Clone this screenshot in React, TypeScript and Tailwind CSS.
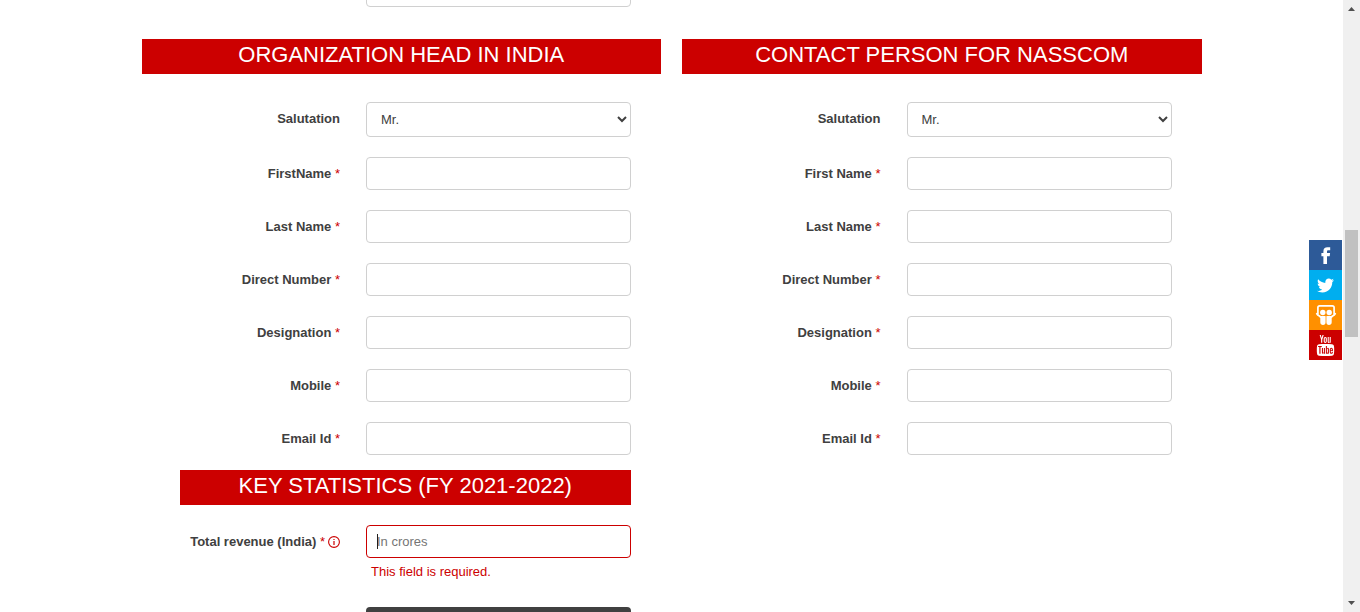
import { useId } from 'react';
import type { ReactNode } from 'react';
import { FaTwitter } from 'react-icons/fa';
import { TfiYoutube } from 'react-icons/tfi';

const fieldClass =
  'block w-full rounded border border-[#d0d0d0] bg-white px-[10px] text-[13px] text-[#404040] outline-none';

function Banner({ children }: { children: ReactNode }) {
  return (
    <h2 className="h-[35px] bg-[#cc0000] text-center font-['Liberation_Sans',Arial,sans-serif] text-[22px] leading-[31px] font-normal text-white uppercase">
      {children}
    </h2>
  );
}

type RowProps = {
  id: string;
  label: string;
  required?: boolean;
  extra?: ReactNode;
  children: ReactNode;
};

function Row({ id, label, required, extra, children }: RowProps) {
  return (
    <div className="flex items-start gap-[26px]">
      <div className="flex h-[33px] flex-1 items-center justify-end gap-[3px]">
        <label htmlFor={id} className="text-[13px] font-bold text-[#404040]">
          {label}
          {required && <span className="font-normal text-[#cc0000]"> *</span>}
        </label>
        {extra}
      </div>
      <div className="w-[265px] shrink-0">{children}</div>
    </div>
  );
}

function PersonForm({ title, fields }: { title: string; fields: string[] }) {
  const base = useId();
  return (
    <section>
      <Banner>{title}</Banner>
      <div className="mt-7 flex flex-col gap-5 pr-[30px]">
        <Row id={`${base}-salutation`} label="Salutation">
          <select id={`${base}-salutation`} className={`${fieldClass} h-[35px]`}>
            <option>Mr.</option>
            <option>Ms.</option>
            <option>Dr.</option>
          </select>
        </Row>
        {fields.map((field) => (
          <Row key={field} id={`${base}-${field}`} label={field} required>
            <input id={`${base}-${field}`} type="text" className={`${fieldClass} h-[33px]`} />
          </Row>
        ))}
      </div>
    </section>
  );
}

function InfoIcon() {
  return (
    <svg viewBox="0 0 12 12" className="size-3 text-[#cc0000]" aria-hidden="true">
      <circle cx="6" cy="6" r="5.4" fill="none" stroke="currentColor" strokeWidth="1.1" />
      <path d="M5.4 2.9h1.2v1.2H5.4zM5.4 5h1.2v4H5.4z" fill="currentColor" />
    </svg>
  );
}

function FacebookIcon() {
  return (
    <svg viewBox="0 0 10 17" className="h-[17px] w-[10px]" fill="currentColor" aria-hidden="true">
      <path d="M2.4 17V9.2H.4V6.1h2V4.4C2.4 1.7 3.8.3 6.5.3h2.7v3H7.5c-1.1 0-1.5.4-1.5 1.4v1.4h3.1l-.4 3.1H6V17z" />
    </svg>
  );
}

function SlideShareIcon() {
  return (
    <svg viewBox="0 0 22 22" className="size-[22px]" fill="currentColor" aria-hidden="true">
      <path
        d="M1.7 9.7c.5 1.2 1.5 2 3 2.4M20.3 9.7c-.5 1.2-1.5 2-3 2.4M2.9 10.4V3.6c0-1.1.7-1.8 1.8-1.8h12.6c1.1 0 1.8.7 1.8 1.8v6.8"
        fill="none"
        stroke="currentColor"
        strokeWidth="1.7"
        strokeLinecap="round"
      />
      <circle cx="7.8" cy="8.5" r="2.7" />
      <circle cx="14.2" cy="8.5" r="2.7" />
      <path d="M3.6 11.4c2.2.9 4.6.8 6.6.5.4 0 .4.3.4.7v5.6c0 1.7-1 2.8-2.6 2.8s-2.7-1.1-2.7-2.8v-4.3c-1-.6-1.5-1.6-1.7-2.5zM18.4 11.4c-2.2.9-4.6.8-6.6.5-.4 0-.4.3-.4.7v5.6c0 1.7 1 2.8 2.6 2.8s2.7-1.1 2.7-2.8v-4.3c1-.6 1.5-1.6 1.7-2.5z" />
    </svg>
  );
}

function SocialLinks() {
  return (
    <nav
      aria-label="Social"
      className="absolute top-[240px] right-[18px] flex w-[33px] flex-col text-white [&>a]:flex [&>a]:h-[30px] [&>a]:items-center [&>a]:justify-center"
    >
      <a href="#facebook" aria-label="Facebook" className="bg-[#2d5a98]">
        <FacebookIcon />
      </a>
      <a href="#twitter" aria-label="Twitter" className="bg-[#00aeef]">
        <FaTwitter size={17} />
      </a>
      <a href="#slideshare" aria-label="SlideShare" className="bg-[#ff9000]">
        <SlideShareIcon />
      </a>
      <a href="#youtube" aria-label="YouTube" className="bg-[#cc0000]">
        <TfiYoutube size={21} />
      </a>
    </nav>
  );
}

function ScrollTrack() {
  return (
    <div className="flex w-[17px] shrink-0 flex-col items-center bg-[#f0f0f0]" aria-hidden="true">
      <svg viewBox="0 0 17 17" className="size-[17px]" fill="#505050">
        <path d="M5 11l3.5-4L12 11z" />
      </svg>
      <div className="mt-[213px] h-[107px] w-[13px] bg-[#c1c1c1]" />
      <svg viewBox="0 0 17 17" className="mt-auto size-[17px]" fill="#505050">
        <path d="M5 6l3.5 4L12 6z" />
      </svg>
    </div>
  );
}

export default function App() {
  return (
    <div className="relative flex h-screen overflow-hidden bg-white font-['Liberation_Sans',Arial,sans-serif]">
      <main className="min-w-0 flex-1 overflow-hidden">
        <div className="mx-auto -mt-[26px] w-full max-w-[1060px]">
          <div className="grid grid-cols-2 gap-x-[21px]">
            <div className="flex justify-end pr-[30px]">
              <input type="text" aria-label="Website" className={`${fieldClass} h-[33px] max-w-[265px]`} />
            </div>
          </div>
          <div className="mt-8 grid grid-cols-2 gap-x-[21px]">
            <PersonForm
              title="Organization Head in India"
              fields={['FirstName', 'Last Name', 'Direct Number', 'Designation', 'Mobile', 'Email Id']}
            />
            <PersonForm
              title="Contact Person for NASSCOM"
              fields={['First Name', 'Last Name', 'Direct Number', 'Designation', 'Mobile', 'Email Id']}
            />
            <section className="mt-[15px] pr-[30px] pl-[38px]">
              <Banner>Key Statistics (FY 2021-2022)</Banner>
              <div className="mt-5">
                <Row id="revenue" label="Total revenue (India)" required extra={<InfoIcon />}>
                  <div className="relative">
                    <input
                      id="revenue"
                      type="text"
                      placeholder="In crores"
                      aria-invalid="true"
                      aria-describedby="revenue-error"
                      className="block h-[33px] w-full rounded border border-[#cc0000] bg-white px-[10px] text-[13px] text-[#404040] outline-none placeholder:text-[#757575]"
                    />
                    <span className="absolute top-[9px] left-[11px] h-[15px] w-px bg-[#202020]" />
                  </div>
                  <p id="revenue-error" className="mt-1 pl-[5px] text-[13px] leading-[20px] text-[#cc0000]">
                    This field is required.
                  </p>
                  <button
                    type="button"
                    aria-label="Continue"
                    className="mt-[25px] block h-[35px] w-full rounded bg-[#404040]"
                  />
                </Row>
              </div>
            </section>
          </div>
        </div>
      </main>
      <SocialLinks />
      <ScrollTrack />
    </div>
  );
}
